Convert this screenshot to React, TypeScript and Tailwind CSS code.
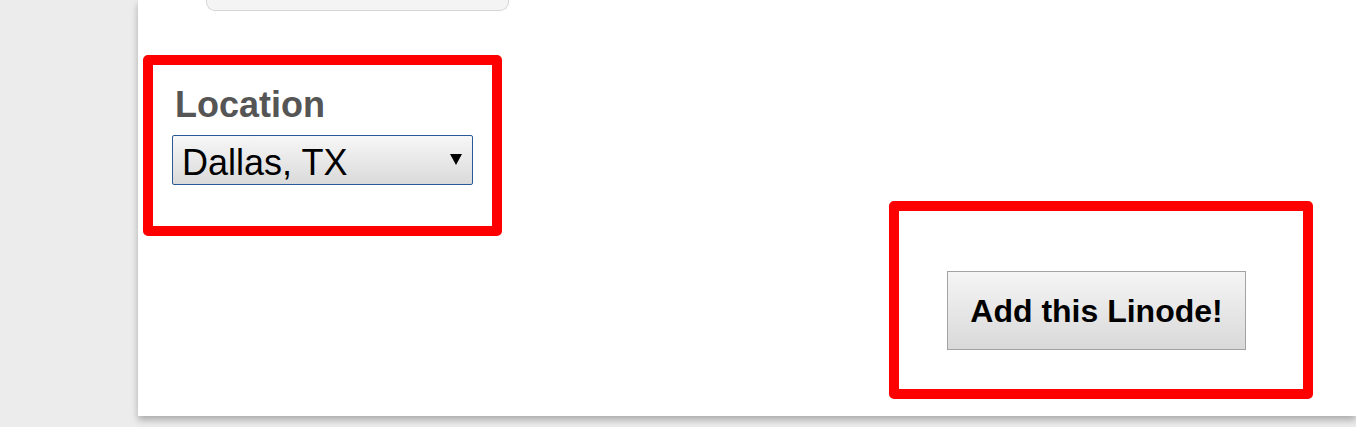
import { useState } from "react";

const locations = ["Dallas, TX", "Fremont, CA", "Atlanta, GA", "Newark, NJ", "London, UK", "Tokyo, JP"];

export default function App() {
  const [location, setLocation] = useState("Dallas, TX");

  return (
    <div className="h-[427px] w-full overflow-hidden bg-[#ececec] font-['Liberation_Sans',Arial,sans-serif]">
      <div className="ml-[138px] flex h-[416px] flex-col bg-white shadow-[0_4px_7px_rgba(0,0,0,0.28)]">
        <div className="ml-[68px] h-[11px] w-[303px] rounded-b-[9px] border border-t-0 border-[#d6d6d6] bg-[#f4f4f4]" />

        <div className="mt-[44px] flex items-start justify-between pl-[5px] pr-[43px]">
          <div className="h-[181px] w-[359px] rounded-[5px] border-[10px] border-[#ff0000] pl-[19px] pt-[20px]">
            <label className="block">
              <span className="ml-[3px] block text-[36px] font-bold leading-[40px] text-[#555555]">Location</span>
              <div className="relative mt-[10px] h-[50px] w-[301px]">
                <select
                  className="h-full w-full appearance-none rounded-[2px] border border-[#2a5a96] bg-gradient-to-b from-[#f7f7f7] to-[#dadada] pl-[9px] text-[36px] text-black outline-none"
                  onChange={(event) => setLocation(event.target.value)}
                  value={location}
                >
                  {locations.map((name) => (
                    <option key={name} value={name}>
                      {name}
                    </option>
                  ))}
                </select>
                <svg
                  className="pointer-events-none absolute right-[11px] top-[18px]"
                  height="12"
                  viewBox="0 0 12 12"
                  width="12"
                >
                  <path d="M0 1h12L6 12z" fill="#000" />
                </svg>
              </div>
            </label>
          </div>

          <div className="mt-[146px] h-[198px] w-[424px] rounded-[5px] border-[10px] border-[#ff0000] pl-[48px] pt-[60px]">
            <button
              className="h-[79px] w-[299px] border border-[#a3a3a3] bg-gradient-to-b from-[#f5f5f5] to-[#d9d9d9] text-[32px] font-bold text-black"
              type="button"
            >
              Add this Linode!
            </button>
          </div>
        </div>
      </div>
    </div>
  );
}
